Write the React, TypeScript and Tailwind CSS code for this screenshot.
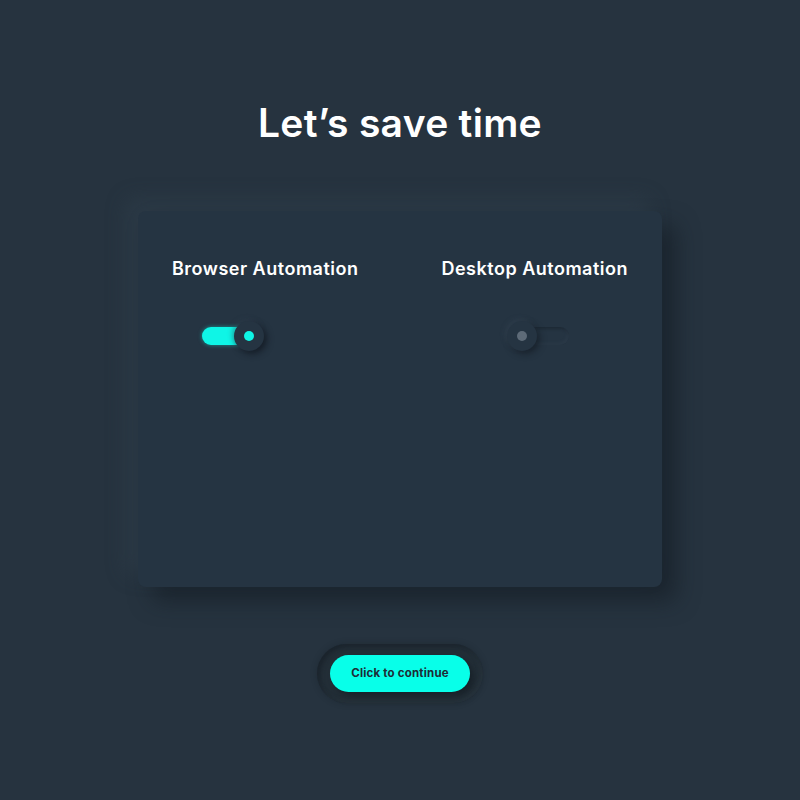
import { useState } from 'react';

function Toggle({ on, onChange }: { on: boolean; onChange: () => void }) {
  return (
    <button onClick={onChange} className="relative w-[62px] h-[32px] flex items-center">
      <span
        className={
          on
            ? 'absolute left-0 w-[50px] h-[18px] rounded-full bg-[#0ff5e6] shadow-[0_0_4px_rgba(15,245,230,0.5)]'
            : 'absolute left-[10px] right-0 h-[18px] rounded-full bg-[#253442] shadow-[inset_2px_2px_3px_rgba(20,28,36,0.4),inset_-2px_-2px_3px_rgba(60,75,90,0.2)]'
        }
      />
      <span
        className={
          on
            ? 'absolute left-[32px] w-[30px] h-[30px] rounded-full bg-[#253442] flex items-center justify-center shadow-[3px_3px_6px_rgba(16,22,30,0.7),-2px_-2px_5px_rgba(55,70,85,0.35)]'
            : 'absolute left-0 w-[30px] h-[30px] rounded-full bg-[#253442] flex items-center justify-center shadow-[3px_3px_6px_rgba(16,22,30,0.55),-2px_-2px_5px_rgba(60,75,90,0.4)]'
        }
      >
        <span className={on ? 'w-[10px] h-[10px] rounded-full bg-[#0ff5e6]' : 'w-[10px] h-[10px] rounded-full bg-[#5e6b78]'} />
      </span>
    </button>
  );
}

export default function App() {
  const [browser, setBrowser] = useState(true);
  const [desktop, setDesktop] = useState(false);

  return (
    <div
      className="w-[800px] h-[800px] bg-[#26333f] flex flex-col items-center text-white"
      style={{ fontFamily: 'Inter, "Open Sans", sans-serif' }}
    >
      <h1 className="mt-[98px] text-[39px] leading-[50px] font-semibold tracking-[0.3px]">Let’s save time</h1>

      {/* Card */}
      <div className="mt-[63px] w-[524px] h-[376px] rounded-[8px] bg-[#253442] flex justify-between px-[34px] pt-[47px] shadow-[14px_14px_22px_rgba(18,25,32,0.55),-12px_-12px_20px_rgba(52,66,80,0.45)]">
        <div className="flex flex-col items-start">
          <h2 className="text-[18px] leading-[22px] font-semibold tracking-[0.5px]">Browser Automation</h2>
          <div className="mt-[40px] ml-[30px]">
            <Toggle on={browser} onChange={() => setBrowser(!browser)} />
          </div>
        </div>
        <div className="flex flex-col items-start">
          <h2 className="text-[18px] leading-[22px] font-semibold tracking-[0.5px]">Desktop Automation</h2>
          <div className="mt-[40px] ml-[66px]">
            <Toggle on={desktop} onChange={() => setDesktop(!desktop)} />
          </div>
        </div>
      </div>

      {/* Continue */}
      <div className="mt-[57px] p-[11px_13px] rounded-full bg-[#243039] shadow-[inset_3px_3px_6px_rgba(16,22,30,0.5),inset_-2px_-2px_5px_rgba(55,68,80,0.3),0_0_6px_rgba(16,22,30,0.3)]">
        <button className="w-[140px] h-[37px] rounded-full bg-[#08ffe9] text-[#1e2b36] text-[11.5px] font-bold tracking-[0.2px] shadow-[4px_4px_8px_rgba(14,20,26,0.6)]">
          Click to continue
        </button>
      </div>
    </div>
  );
}
